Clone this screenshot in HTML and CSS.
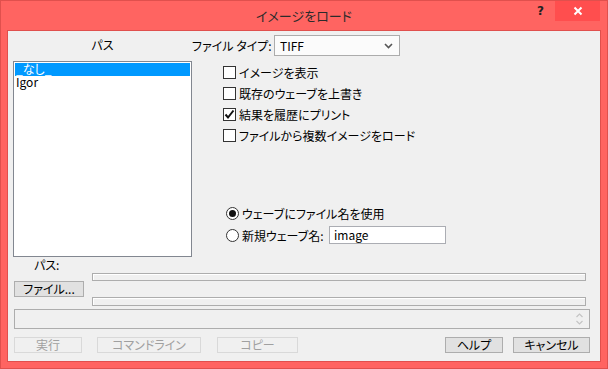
FILE: index.html
```html
<!DOCTYPE html>
<html lang="ja">
<head>
    <meta charset="UTF-8">
    <title>イメージをロード</title>
    <link rel="stylesheet" href="styles.css">
</head>
<body>
    <div class="window">
        <div class="titlebar">
            <div></div>
            <div class="title">イメージをロード</div>
            <div class="title-buttons">
                <span class="help">?</span>
                <span class="close">
                    <svg width="10" height="10" viewBox="0 0 10 10"><path d="M1.5 1.5 L8.5 8.5 M8.5 1.5 L1.5 8.5" stroke="#fff" stroke-width="2"/></svg>
                </span>
            </div>
        </div>

        <div class="content">
            <div class="main">
                <!-- 左: パス一覧 -->
                <div class="path-panel">
                    <div class="panel-label">パス</div>
                    <div class="listbox">
                        <div class="list-item selected">_なし_</div>
                        <div class="list-item">Igor</div>
                    </div>
                </div>

                <!-- 右: オプション -->
                <div class="options">
                    <div class="type-row">
                        <span class="type-label">ファイル タイプ:</span>
                        <div class="select">
                            <span>TIFF</span>
                            <svg width="9" height="6" viewBox="0 0 9 6"><path d="M1 1 L4.5 4.5 L8 1" fill="none" stroke="#555" stroke-width="1.6"/></svg>
                        </div>
                    </div>

                    <div class="checks">
                        <label class="check-row"><span class="checkbox"></span>イメージを表示</label>
                        <label class="check-row"><span class="checkbox"></span>既存のウェーブを上書き</label>
                        <label class="check-row"><span class="checkbox checked"><svg width="11" height="11" viewBox="0 0 11 11"><path d="M1.5 5.5 L4 8.5 L9.5 1.5" fill="none" stroke="#111" stroke-width="2"/></svg></span>結果を履歴にプリント</label>
                        <label class="check-row"><span class="checkbox"></span>ファイルから複数イメージをロード</label>
                    </div>

                    <div class="radios">
                        <label class="radio-row"><span class="radio on"></span>ウェーブにファイル名を使用</label>
                        <label class="radio-row"><span class="radio"></span><span class="radio-text">新規ウェーブ名:</span><span class="textbox">image</span></label>
                    </div>
                </div>
            </div>

            <div class="file-area">
                <div class="path-label">パス:</div>
                <div class="bar bar-top"></div>
                <div class="btn file-btn">ファイル...</div>
                <div class="bar bar-bottom"></div>
            </div>

            <div class="status">
                <svg class="spin" width="9" height="16" viewBox="0 0 9 16"><path d="M1.5 6 L4.5 3 L7.5 6 M1.5 10 L4.5 13 L7.5 10" fill="none" stroke="#c4c4c4" stroke-width="1.2"/></svg>
            </div>

            <div class="buttons">
                <div class="btn disabled btn-run">実行</div>
                <div class="btn disabled btn-cmd">コマンドライン</div>
                <div class="btn disabled btn-copy">コピー</div>
                <div class="btn btn-help">ヘルプ</div>
                <div class="btn btn-cancel">キャンセル</div>
            </div>
        </div>
    </div>
</body>
</html>
```

FILE: styles.css
```css
* {
    margin: 0;
    padding: 0;
    box-sizing: border-box;
}

body {
    font-family: "Noto Sans CJK JP", "Noto Sans", sans-serif;
    font-size: 12px;
    font-feature-settings: "palt";
    color: #000;
    background: #fff;
}

.window {
    width: 608px;
    height: 369px;
    background: #ff6461;
    border: 1px solid #e0504d;
    display: flex;
    flex-direction: column;
    padding: 0 6px 6px;
}

.titlebar {
    height: 29px;
    display: grid;
    grid-template-columns: 1fr auto 1fr;
    align-items: center;
}

.title {
    font-size: 13px;
    color: #2b2b2b;
    line-height: 16px;
}

.title-buttons {
    display: flex;
    justify-content: flex-end;
    align-self: start;
}

.help {
    font-family: "DejaVu Sans", sans-serif;
    font-weight: bold;
    font-size: 12px;
    line-height: 21px;
    color: #222;
    margin-right: 11px;
}

.close {
    width: 45px;
    height: 20px;
    margin-right: 1px;
    background: #ff4e4e;
    display: flex;
    align-items: center;
    justify-content: center;
}

.content {
    flex: 1;
    background: #f0f0f0;
    border: 1px solid #e0504d;
    display: flex;
    flex-direction: column;
}

.main {
    height: 226px;
    display: flex;
}

.path-panel {
    width: 179px;
    margin-left: 5px;
    display: flex;
    flex-direction: column;
}

.panel-label {
    height: 30px;
    padding-top: 6px;
    line-height: 16px;
    text-align: center;
}

.listbox {
    flex: 1;
    background: #fff;
    border: 1px solid #828790;
    padding: 1px;
}

.list-item {
    height: 13px;
    line-height: 11px;
    padding-left: 1px;
}

.list-item.selected {
    background: #0099ff;
    color: #fff;
}

.options {
    flex: 1;
    display: flex;
    flex-direction: column;
}

.type-row {
    display: flex;
    align-items: center;
    margin-top: 4px;
    height: 21px;
}

.type-label {
    width: 82px;
}

.select {
    width: 126px;
    height: 21px;
    border: 1px solid #acacac;
    background: #fbfbfb;
    display: flex;
    align-items: center;
    justify-content: space-between;
    padding: 0 6px 0 5px;
}

.checks {
    margin-top: 6px;
    padding-left: 31px;
}

.check-row {
    height: 21px;
    display: flex;
    align-items: center;
}

.checkbox {
    width: 13px;
    height: 13px;
    border: 1px solid #333;
    background: #fff;
    margin-right: 3px;
    display: flex;
    align-items: center;
    justify-content: center;
}

.radios {
    margin-top: 56px;
    padding-left: 34px;
}

.radio-row {
    height: 22px;
    display: flex;
    align-items: center;
}

.radio {
    width: 13px;
    height: 13px;
    border: 1px solid #333;
    border-radius: 50%;
    background: #fff;
    margin-right: 3px;
    display: flex;
    align-items: center;
    justify-content: center;
}

.radio.on::after {
    content: "";
    width: 7px;
    height: 7px;
    border-radius: 50%;
    background: #111;
}

.radio-text {
    width: 87px;
}

.textbox {
    width: 117px;
    height: 18px;
    border: 1px solid #abadb3;
    background: #fff;
    padding-left: 4px;
    line-height: 16px;
}

.file-area {
    display: grid;
    grid-template-columns: 70px 494px;
    grid-template-rows: 16px 8px 16px 9px;
    column-gap: 8px;
    margin-left: 6px;
}

.path-label {
    grid-column: 1;
    grid-row: 1;
    padding-left: 20px;
    line-height: 16px;
}

.bar {
    grid-column: 2;
    border: 1px solid #adadad;
    background: #f0f0f0;
    box-shadow: inset 1px 1px 0 #fff;
}

.bar-top {
    grid-row: 2;
}

.bar-bottom {
    grid-row: 4;
}

.file-btn {
    grid-column: 1;
    grid-row: 3;
}

.btn {
    height: 16px;
    border: 1px solid #adadad;
    background: #e1e1e1;
    display: flex;
    align-items: center;
    justify-content: center;
    line-height: 14px;
}

.btn.disabled {
    border-color: #d9d9d9;
    background: #f0f0f0;
    color: #a0a0a0;
}

.status {
    width: 576px;
    height: 20px;
    margin: 3px 0 0 6px;
    border: 1px solid #adadad;
    background: #f0f0f0;
    display: flex;
    justify-content: flex-end;
    align-items: center;
    padding-right: 5px;
}

.buttons {
    display: flex;
    margin-top: 8px;
    height: 17px;
}

.btn-run {
    width: 68px;
    margin-left: 6px;
}

.btn-cmd {
    width: 104px;
    margin-left: 15px;
}

.btn-copy {
    width: 81px;
    margin-left: 16px;
}

.btn-help {
    width: 58px;
    margin-left: auto;
}

.btn-cancel {
    width: 77px;
    margin-left: 10px;
    margin-right: 10px;
}
```
